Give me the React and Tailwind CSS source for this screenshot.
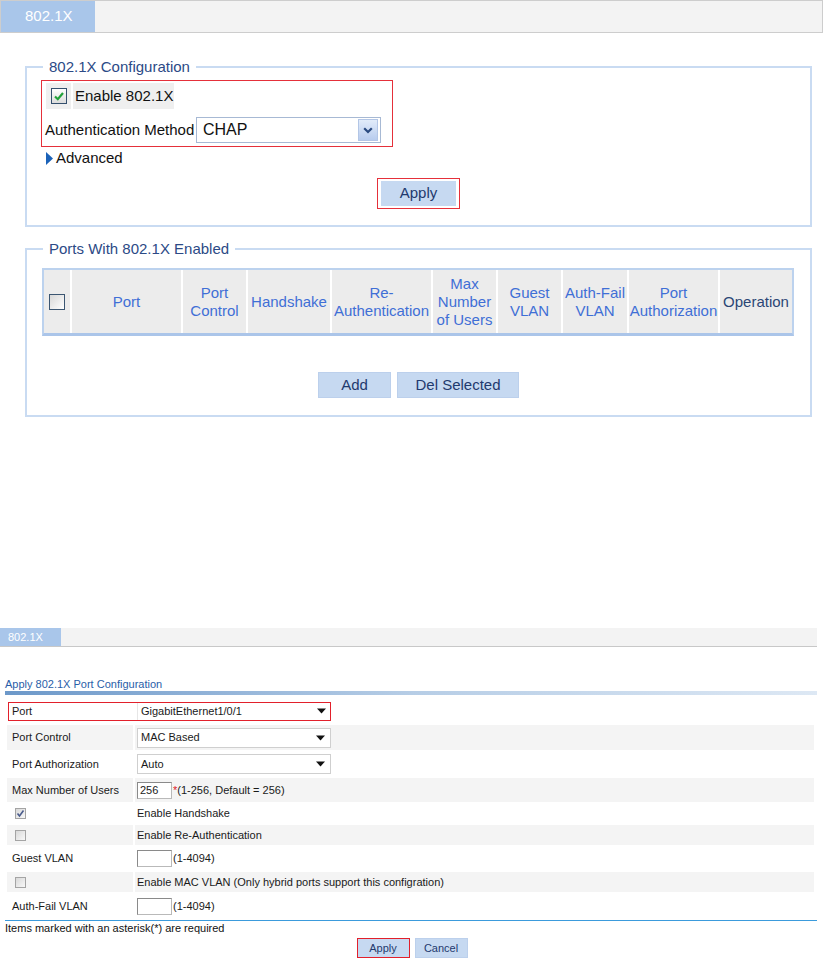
import React from 'react';

// small black triangle used by the plain selects in the lower form
const Arrow = () => (
  <svg width="9" height="6" viewBox="0 0 9 6">
    <path d="M0 0.5 H9 L4.5 5.5 Z" fill="#111" />
  </svg>
);

const Select = ({ value }) => (
  <div className="w-[194px] h-[20px] border border-[#cfcfcf] bg-white flex items-center justify-between pl-[3px] pr-[5px]">
    <span>{value}</span>
    <Arrow />
  </div>
);

const SmallCheck = ({ checked }) => (
  <div className="ml-[3px] w-[11px] h-[11px] border border-[#a4a4a4] bg-gradient-to-br from-[#d9d9d9] to-[#f8f8f8] flex items-center justify-center">
    {checked && (
      <svg width="9" height="9" viewBox="0 0 9 9">
        <path d="M1.5 4.5 L3.5 7 L7.5 1.5" stroke="#4b5c8c" strokeWidth="1.6" fill="none" />
      </svg>
    )}
  </div>
);

const VlanInput = () => (
  <div className="w-[35px] h-[17px] border border-[#b9b9b9] border-t-[#8a8a8a] border-l-[#8a8a8a] bg-white"></div>
);

const Row = ({ h, gray, label, children }) => (
  <div className={`flex gap-[2px] ${h}`}>
    <div className={`w-[126px] flex items-center pl-[5px] ${gray ? 'bg-[#f4f4f4]' : 'bg-white'}`}>{label}</div>
    <div className={`flex-1 flex items-center pl-[2px] ${gray ? 'bg-[#f4f4f4]' : 'bg-white'}`}>{children}</div>
  </div>
);

const HeadCell = ({ w, last, dark, children }) => (
  <div
    className={`${w} flex items-center justify-center text-center leading-[18px] ${last ? '' : 'border-r-2 border-white'} ${dark ? 'text-[#2b4675]' : 'text-[#3f6fd6]'}`}
  >
    {children}
  </div>
);

const BlueButton = ({ w, children }) => (
  <button className={`${w} h-[26px] bg-[#c6d9f1] border border-[#bcd0ec] text-[15px] text-[#1f3a6e]`}>{children}</button>
);

export default function App() {
  return (
    <div className="w-[824px] h-[962px] bg-white font-['Liberation_Sans',Arial,sans-serif] text-[#111] overflow-hidden">
      {/* top tab bar */}
      <div className="w-[823px] h-[33px] flex border border-[#cdcdcd] bg-[#f3f3f3]">
        <div className="w-[94px] bg-[#a9c6ea] text-white text-[15px] flex items-center pl-[24px]">802.1X</div>
      </div>

      <div className="pl-[25px]">
        {/* 802.1X Configuration */}
        <fieldset className="mt-[25px] w-[787px] border-2 border-[#c9dbf2] px-[14px] pb-[16px]">
          <legend className="ml-[2px] px-[6px] text-[15px] leading-[18px] text-[#2c4a86]">802.1X Configuration</legend>

          <div className="mt-[4px] w-[352px] h-[67px] border border-[#e5303a] pl-[4px] pt-[2px]">
            <div className="flex gap-[2px] h-[26px]">
              <div className="w-[25px] bg-[#efefef] flex items-center justify-center">
                <div className="w-[16px] h-[16px] border border-[#34506e] bg-gradient-to-b from-white to-[#dcdcdc] flex items-center justify-center">
                  <svg width="12" height="12" viewBox="0 0 12 12">
                    <path d="M2 6.5 L4.8 9.2 L10 3" stroke="#22a23a" strokeWidth="2.2" fill="none" />
                  </svg>
                </div>
              </div>
              <div className="w-[101px] bg-[#efefef] flex items-center pl-[2px] text-[15px]">Enable 802.1X</div>
            </div>
            <div className="mt-[8px] flex items-center">
              <span className="w-[151px] -ml-[1px] text-[15px]">Authentication Method</span>
              <div className="w-[185px] h-[26px] border border-[#a7b9d4] bg-white flex items-center justify-between pl-[6px] pr-[2px]">
                <span className="text-[16px]">CHAP</span>
                <div className="w-[20px] h-[22px] border border-[#b3c6e6] bg-gradient-to-b from-[#e2ecfa] to-[#b8ccee] flex items-center justify-center">
                  <svg width="10" height="7" viewBox="0 0 10 7">
                    <path d="M1.2 1.2 L5 5 L8.8 1.2" stroke="#2a4a80" strokeWidth="2.2" fill="none" />
                  </svg>
                </div>
              </div>
            </div>
          </div>

          <div className="mt-[3px] ml-[5px] flex items-center gap-[3px] h-[16px] text-[15px]">
            <svg width="7" height="13" viewBox="0 0 7 13">
              <path d="M0 0 L7 6.5 L0 13 Z" fill="#1b62b8" />
            </svg>
            <span>Advanced</span>
          </div>

          <div className="mt-[12px] flex justify-center">
            <div className="border border-[#e5303a] px-[3px] py-[2px]">
              <button className="w-[75px] h-[25px] bg-[#c6d9f1] text-[15px] text-[#1f3a6e]">Apply</button>
            </div>
          </div>
        </fieldset>

        {/* Ports With 802.1X Enabled */}
        <fieldset className="mt-[13px] w-[787px] border-2 border-[#c9dbf2] px-[15px] pb-[17px]">
          <legend className="ml-[1px] px-[6px] text-[15px] leading-[18px] text-[#2c4a86]">Ports With 802.1X Enabled</legend>

          <div className="mt-[10px] w-[752px] h-[68px] flex border-2 border-[#bcd2ee] border-b-[3px] border-b-[#abc5e9] bg-[#ececec] text-[15px]">
            <HeadCell w="w-[28px]">
              <div className="w-[16px] h-[16px] border border-[#3b5672] bg-gradient-to-br from-[#d8d8d8] to-white"></div>
            </HeadCell>
            <HeadCell w="w-[111px]">Port</HeadCell>
            <HeadCell w="w-[65px]">Port<br />Control</HeadCell>
            <HeadCell w="w-[84px]">Handshake</HeadCell>
            <HeadCell w="w-[101px]">Re-<br />Authentication</HeadCell>
            <HeadCell w="w-[65px]">Max<br />Number<br />of Users</HeadCell>
            <HeadCell w="w-[65px]">Guest<br />VLAN</HeadCell>
            <HeadCell w="w-[66px]">Auth-Fail<br />VLAN</HeadCell>
            <HeadCell w="w-[91px]">Port<br />Authorization</HeadCell>
            <HeadCell w="w-[72px]" last dark>Operation</HeadCell>
          </div>

          <div className="mt-[36px] flex justify-center gap-[6px]">
            <BlueButton w="w-[73px]">Add</BlueButton>
            <BlueButton w="w-[122px]">Del Selected</BlueButton>
          </div>
        </fieldset>
      </div>

      {/* second screenshot: port configuration form */}
      <div className="mt-[211px] w-[817px] h-[19px] flex bg-[#f3f3f3] border-b border-[#c8c8c8]">
        <div className="w-[61px] bg-[#a9c6ea] text-white text-[11px] flex items-center pl-[8px]">802.1X</div>
      </div>

      <div className="pl-[5px] w-[817px] text-[11px]">
        <div className="mt-[31px] leading-[13px] text-[#2a5ea8]">Apply 802.1X Port Configuration</div>
        <div className="h-[4px] bg-gradient-to-r from-[#6c98c9] via-[#b6cde6] to-[#dde8f4]"></div>

        <div className="mt-[4px] ml-[2px] w-[807px] flex flex-col gap-[2px] text-[#1a1a1a]">
          <div className="h-[24px] flex items-center">
            <div className="ml-[1px] w-[323px] h-[19px] border border-[#e2202b] flex items-center">
              <span className="w-[128px] pl-[3px]">Port</span>
              <div className="flex-1 h-full border-l border-[#e6e6e6] flex items-center justify-between pl-[3px] pr-[4px]">
                <span>GigabitEthernet1/0/1</span>
                <Arrow />
              </div>
            </div>
          </div>
          <Row h="h-[25px]" gray label="Port Control"><Select value="MAC Based" /></Row>
          <Row h="h-[24px]" label="Port Authorization"><Select value="Auto" /></Row>
          <Row h="h-[24px]" gray label="Max Number of Users">
            <div className="w-[35px] h-[17px] border border-[#b9b9b9] border-t-[#8a8a8a] border-l-[#8a8a8a] bg-white pl-[2px] leading-[15px]">256</div>
            <span className="text-[#e0202a] ml-[1px]">*</span>
            <span>(1-256, Default = 256)</span>
          </Row>
          <Row h="h-[19px]" label={<SmallCheck checked />}>Enable Handshake</Row>
          <Row h="h-[20px]" gray label={<SmallCheck />}>Enable Re-Authentication</Row>
          <Row h="h-[23px]" label="Guest VLAN"><VlanInput /><span className="ml-[1px]">(1-4094)</span></Row>
          <Row h="h-[20px]" gray label={<SmallCheck />}>Enable MAC VLAN (Only hybrid ports support this configration)</Row>
          <Row h="h-[24px]" label="Auth-Fail VLAN"><VlanInput /><span className="ml-[1px]">(1-4094)</span></Row>
        </div>

        <div className="mt-[2px] h-px bg-[#3b9bdc]"></div>
        <div className="mt-[1px] leading-[13px] text-[#111]">Items marked with an asterisk(*) are required</div>
      </div>

      <div className="mt-[3px] w-[824px] flex justify-center gap-[5px] text-[11px]">
        <button className="w-[53px] h-[20px] bg-[#c6d9f1] border border-[#e2202b] text-[#1f3a6e]">Apply</button>
        <button className="w-[53px] h-[20px] bg-[#c6d9f1] border border-[#bcd0ec] text-[#1f3a6e]">Cancel</button>
      </div>
    </div>
  );
}
